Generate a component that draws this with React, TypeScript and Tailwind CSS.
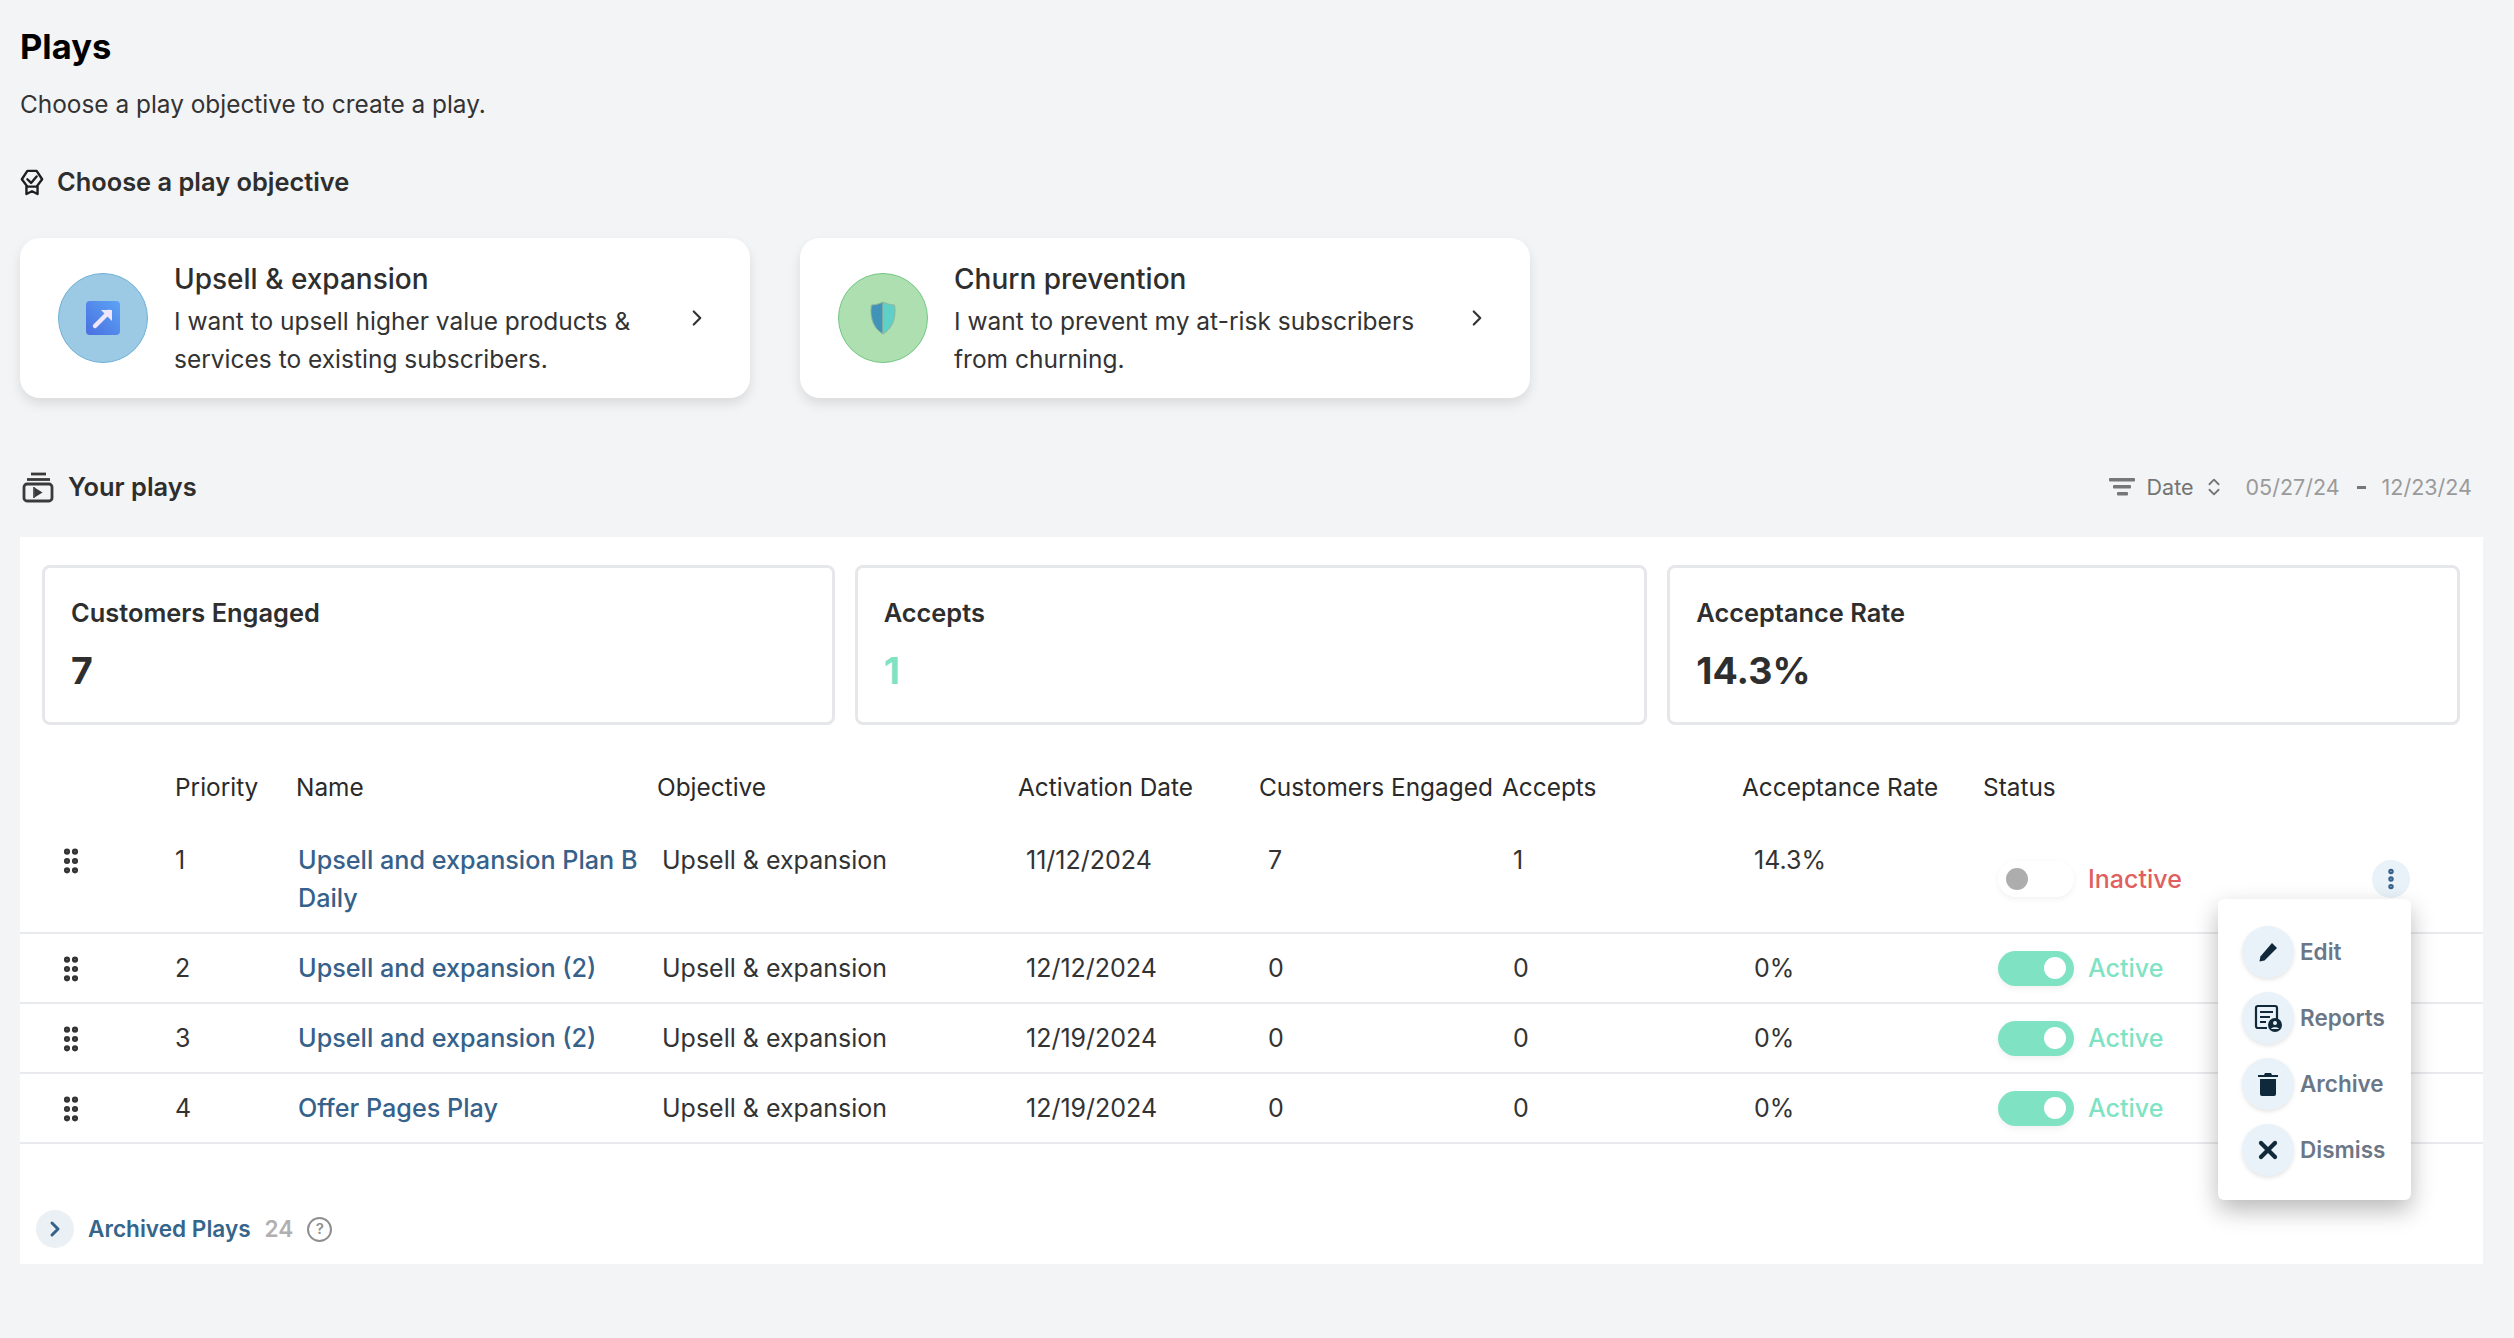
import { ChevronRight, ChevronsUpDown, EllipsisVertical, GripVertical, X } from "lucide-react";

const rows = [
  { id: 1, name: ["Upsell and expansion Plan B", "Daily"], date: "11/12/2024", engaged: "7", accepts: "1", rate: "14.3%", active: false },
  { id: 2, name: ["Upsell and expansion (2)"], date: "12/12/2024", engaged: "0", accepts: "0", rate: "0%", active: true },
  { id: 3, name: ["Upsell and expansion (2)"], date: "12/19/2024", engaged: "0", accepts: "0", rate: "0%", active: true },
  { id: 4, name: ["Offer Pages Play"], date: "12/19/2024", engaged: "0", accepts: "0", rate: "0%", active: true },
];

const cols = "grid grid-cols-[155px_121px_361px_361px_241px_243px_240px_241px_1fr]";

function BadgeIcon() {
  return (
    <svg width="24" height="28" viewBox="0 0 26 28" fill="none" stroke="#1f1f1f" strokeWidth="2.6" strokeLinejoin="round" strokeLinecap="round">
      <path d="M8 2h10l6 9-6 8H8L2 11z" />
      <path d="M8 11l4 4 6-7" />
      <path d="M7 19v8l6-3 6 3v-8" />
    </svg>
  );
}

function PlaysIcon() {
  return (
    <svg width="32" height="32" viewBox="0 0 32 32" fill="none" stroke="#3a3a3a" strokeWidth="2.8">
      <path d="M9 3h15" />
      <path d="M5 8.500h23" />
      <rect x="2" y="13" width="28" height="17" rx="3" />
      <path d="M12.500 16.500l8 5-8 5z" fill="#3a3a3a" stroke="none" />
      <path d="M12 16v11" strokeWidth="1.600" />
    </svg>
  );
}

function UpsellIcon() {
  return (
    <svg width="34" height="34" viewBox="0 0 34 34">
      <defs>
        <linearGradient id="upsellFill" x1="1" y1="0" x2="0" y2="1">
          <stop offset="0" stopColor="#5ca4f4" />
          <stop offset="1" stopColor="#4a6fe0" />
        </linearGradient>
      </defs>
      <rect x="0" y="0" width="34" height="34" rx="4" fill="url(#upsellFill)" />
      <path d="M9 25L23 11" stroke="#efe6fb" strokeWidth="4.500" strokeLinecap="round" />
      <path d="M15 9h11v11z" fill="#efe6fb" />
    </svg>
  );
}

function ShieldIcon() {
  return (
    <svg width="26" height="34" viewBox="0 0 26 34">
      <path d="M13 1C9 3 5 4 1.500 4 0 12 1 26 13 33z" fill="#4193b7" stroke="#8fb79b" strokeWidth="1" />
      <path d="M13 1c4 2 8 3 11.500 3C26 12 25 26 13 33z" fill="#5fd0c7" stroke="#8fb79b" strokeWidth="1" />
    </svg>
  );
}

function ObjectiveCard({ circle, icon, title, lines }: { circle: string; icon: React.ReactNode; title: string; lines: string[] }) {
  return (
    <div className="flex h-[160px] w-[730px] items-center rounded-[20px] bg-white pl-[38px] pr-[40px] shadow-[0_6px_12px_rgba(0,0,0,0.1)]">
      <div className={`flex h-[90px] w-[90px] shrink-0 items-center justify-center rounded-full border ${circle}`}>{icon}</div>
      <div className="ml-[26px] flex-1 pt-[2px]">
        <div className="text-[28px] font-medium leading-[36px] text-[#2e2e2e]">{title}</div>
        <div className="mt-[5px] text-[24.5px] leading-[38px] text-[#333]">
          {lines.map((l) => (
            <div key={l}>{l}</div>
          ))}
        </div>
      </div>
      <ChevronRight className="h-[26px] w-[26px] text-[#333]" strokeWidth={2} />
    </div>
  );
}

function StatCard({ label, value, valueColor }: { label: string; value: string; valueColor: string }) {
  return (
    <div className="h-[160px] flex-1 rounded-[8px] border-[3px] border-[#e6e7eb] pl-[26px] pt-[27px]">
      <div className="text-[25.4px] font-semibold leading-[36px] text-[#2e2e2e]">{label}</div>
      <div className={`mt-[17px] text-[37.5px] font-bold leading-[46px] ${valueColor}`}>{value}</div>
    </div>
  );
}

function Toggle({ on }: { on: boolean }) {
  if (on) {
    return (
      <span className="flex h-[35px] w-[76px] items-center justify-end rounded-full bg-[#7fe3c3] pr-[8px] shadow-[0_3px_6px_rgba(0,0,0,0.06)]">
        <span className="h-[22px] w-[22px] rounded-full bg-white" />
      </span>
    );
  }
  return (
    <span className="flex h-[36px] w-[76px] items-center rounded-full bg-white pl-[8px] shadow-[0_2px_6px_rgba(0,0,0,0.06)]">
      <span className="h-[22px] w-[22px] rounded-full bg-[#adadad]" />
    </span>
  );
}

function MenuItem({ icon, label }: { icon: React.ReactNode; label: string }) {
  return (
    <div className="flex h-[52px] items-center">
      <span className="flex h-[52px] w-[52px] items-center justify-center rounded-full bg-[#e8f2f8] shadow-[0_2px_4px_rgba(0,0,0,0.1)]">{icon}</span>
      <span className="ml-[6px] text-[22.5px] font-semibold text-[#6b7787]">{label}</span>
    </div>
  );
}

export default function App() {
  return (
    <div className="h-[1338px] bg-[#f3f4f6] pl-[20px] pr-[31px] font-['Inter',sans-serif]">
      <h1 className="pt-[27px] text-[34.5px] font-bold leading-[40px] text-black">Plays</h1>
      <p className="mt-[18px] text-[24.4px] leading-[38px] text-[#333]">Choose a play objective to create a play.</p>

      {/* objectives */}
      <div className="mt-[44px] flex h-[30px] items-center">
        <BadgeIcon />
        <span className="ml-[13px] text-[25.4px] font-semibold text-[#2e2e2e]">Choose a play objective</span>
      </div>
      <div className="mt-[41px] flex gap-[50px]">
        <ObjectiveCard
          circle="border-[#6fb0d6] bg-[#9ccae4]"
          icon={<UpsellIcon />}
          title="Upsell & expansion"
          lines={["I want to upsell higher value products &", "services to existing subscribers."]}
        />
        <ObjectiveCard
          circle="border-[#72c783] bg-[#aedfb0]"
          icon={<ShieldIcon />}
          title="Churn prevention"
          lines={["I want to prevent my at-risk subscribers", "from churning."]}
        />
      </div>

      {/* your plays */}
      <div className="mt-[73px] flex h-[32px] items-center pl-[2px]">
        <PlaysIcon />
        <span className="ml-[14px] text-[25.4px] font-semibold text-[#2e2e2e]">Your plays</span>
        <div className="ml-auto flex items-center pr-[11px] text-[21.5px]">
          <svg width="26" height="18" viewBox="0 0 26 18" fill="#777">
            <rect x="0" y="0" width="26" height="3.500" rx="1" />
            <rect x="4" y="7" width="18" height="3.500" rx="1" />
            <rect x="8" y="14" width="11" height="3.500" rx="1" />
          </svg>
          <span className="ml-[12px] text-[#747474]">Date</span>
          <ChevronsUpDown className="ml-[9px] h-[26px] w-[22px] text-[#747474]" strokeWidth={2} />
          <span className="ml-[21px] text-[#9a9a9a]">05/27/24</span>
          <span className="ml-[17px] h-[3px] w-[9px] bg-[#777]" />
          <span className="ml-[16px] text-[#9a9a9a]">12/23/24</span>
        </div>
      </div>

      <section className="relative mt-[34px] h-[727px] bg-white">
        <div className="flex gap-[20px] pl-[22px] pr-[23px] pt-[28px]">
          <StatCard label="Customers Engaged" value="7" valueColor="text-[#2e2e2e]" />
          <StatCard label="Accepts" value="1" valueColor="text-[#7fe3c3]" />
          <StatCard label="Acceptance Rate" value="14.3%" valueColor="text-[#2e2e2e]" />
        </div>

        {/* table */}
        <div className={`${cols} mt-[43px] text-[24.4px] leading-[38px] text-[#2a2a2a]`}>
          <span />
          <span>Priority</span>
          <span>Name</span>
          <span>Objective</span>
          <span>Activation Date</span>
          <span>Customers Engaged</span>
          <span>Accepts</span>
          <span>Acceptance Rate</span>
          <span>Status</span>
        </div>
        <div className="mt-[20px]">
          {rows.map((r) => (
            <div key={r.id} className={`${cols} items-start border-b-2 border-[#e9eaed] py-[15px] text-[25px] leading-[38px] text-[#333]`}>
              <span className="flex h-[38px] items-center pl-[35px] pt-[2px]">
                <GripVertical className="h-[32px] w-[32px] text-[#333]" strokeWidth={2.600} />
              </span>
              <span>{r.id}</span>
              <span className="pl-[2px] text-[25.2px] font-medium text-[#35618a]">
                {r.name.map((n) => (
                  <div key={n}>{n}</div>
                ))}
              </span>
              <span className="pl-[5px]">Upsell &amp; expansion</span>
              <span className="pl-[8px]">{r.date}</span>
              <span className="pl-[9px]">{r.engaged}</span>
              <span className="pl-[11px]">{r.accepts}</span>
              <span className="pl-[12px]">{r.rate}</span>
              <span className="flex h-full items-center self-center pl-[15px]">
                <Toggle on={r.active} />
                <span className={`ml-[14px] font-medium ${r.active ? "text-[#7fe3c3]" : "text-[#e05f5f]"}`}>{r.active ? "Active" : "Inactive"}</span>
              </span>
            </div>
          ))}
        </div>

        {/* row menu, opened from the first row */}
        <span className="absolute left-[2352px] top-[323px] flex h-[38px] w-[38px] items-center justify-center rounded-full bg-[#e8f2f8]">
          <EllipsisVertical className="h-[26px] w-[26px] text-[#35618a]" strokeWidth={3} />
        </span>
        <div className="absolute left-[2198px] top-[362px] flex h-[301px] w-[193px] flex-col gap-[14px] rounded-[6px] bg-white pl-[24px] pt-[27px] shadow-[0_10px_24px_rgba(0,0,0,0.28)]">
          <MenuItem
            label="Edit"
            icon={
              <svg width="22" height="22" viewBox="0 0 22 22" fill="#10293a">
                <path d="M15 2l5 5L7.500 19.500l-5 1 .9-5.100z" />
              </svg>
            }
          />
          <MenuItem
            label="Reports"
            icon={
              <svg width="30" height="28" viewBox="0 0 30 28" fill="none" stroke="#10293a" strokeWidth="2.200">
                <path d="M14 24H5a2 2 0 0 1-2-2V4a2 2 0 0 1 2-2h17a2 2 0 0 1 2 2v11" />
                <path d="M7 8h13M7 13h10M7 18h6" />
                <circle cx="22" cy="21" r="7" fill="#10293a" stroke="none" />
                <circle cx="22" cy="19" r="2" fill="#e8f2f8" stroke="none" />
                <path d="M18 25c.5-2.500 7.500-2.500 8 0z" fill="#e8f2f8" stroke="none" />
              </svg>
            }
          />
          <MenuItem
            label="Archive"
            icon={
              <svg width="20" height="24" viewBox="0 0 20 24" fill="#10293a">
                <path d="M0 3h6l1-2h6l1 2h6v2H0z" />
                <path d="M2 7h16v15a2 2 0 0 1-2 2H4a2 2 0 0 1-2-2z" />
              </svg>
            }
          />
          <MenuItem label="Dismiss" icon={<X className="h-[28px] w-[28px] text-[#10293a]" strokeWidth={3.600} />} />
        </div>

        {/* archived */}
        <div className="mt-[66px] flex items-center pl-[16px]">
          <span className="flex h-[38px] w-[38px] items-center justify-center rounded-full bg-[#ebf0f4]">
            <ChevronRight className="h-[24px] w-[24px] text-[#35618a]" strokeWidth={3} />
          </span>
          <span className="ml-[14px] text-[22.6px] font-semibold text-[#35658a]">Archived Plays</span>
          <span className="ml-[14px] text-[22.6px] font-semibold text-[#b0b0b0]">24</span>
          <span className="ml-[14px] flex h-[25px] w-[25px] items-center justify-center rounded-full border-[2.5px] border-[#8f8f8f] text-[15px] font-semibold text-[#8f8f8f]">?</span>
        </div>
      </section>
    </div>
  );
}
